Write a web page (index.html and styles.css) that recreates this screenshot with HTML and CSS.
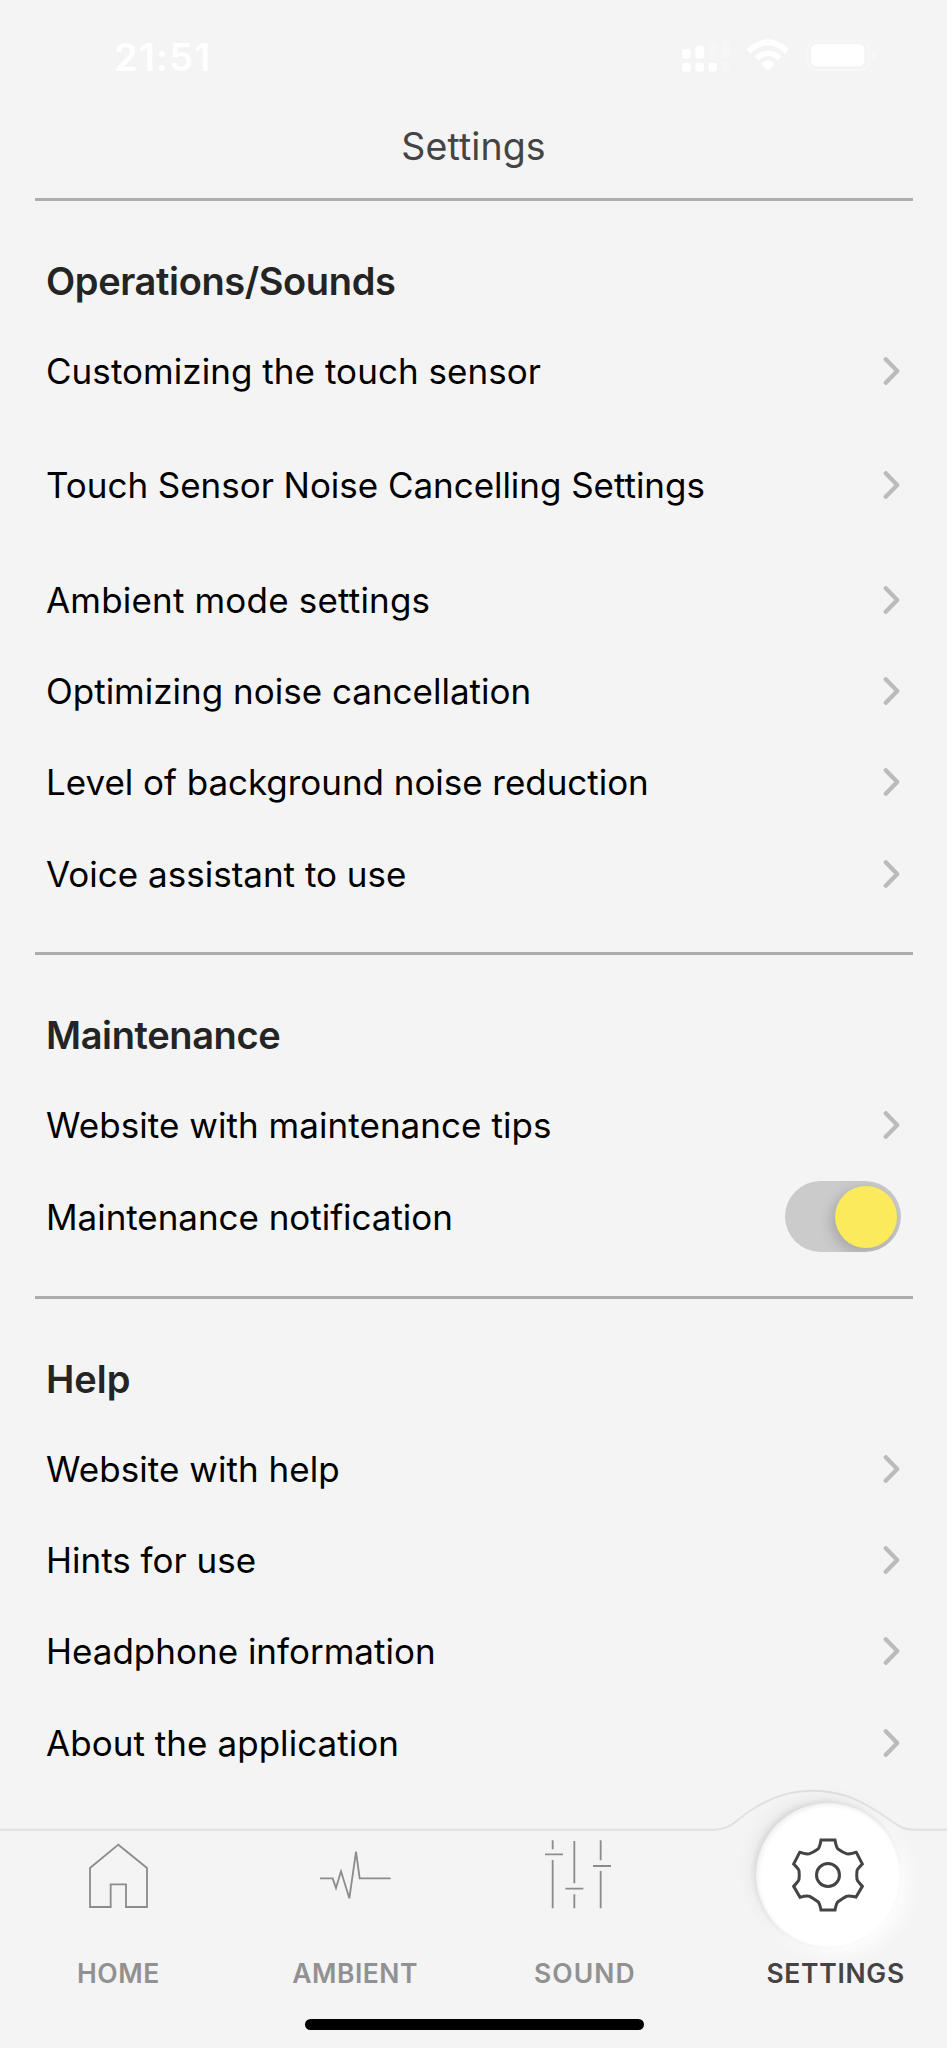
FILE: index.html
```html
<!DOCTYPE html>
<html lang="en">
<head>
<meta charset="utf-8">
<title>Settings</title>
<link rel="stylesheet" href="styles.css">
</head>
<body>
<svg class="defs" aria-hidden="true">
  <symbol id="chevron" viewBox="0 0 18 30"><path d="M2.8 3.2 L14.2 15 L2.8 26.8"/></symbol>
</svg>
<div class="screen">
  <div class="status">
    <span class="time">21:51</span>
    <svg class="status-icons" viewBox="120 55 600 105">
      <g fill="#fff">
        <rect x="126" y="88" width="26" height="29" rx="9"/>
        <rect x="166" y="78" width="26" height="39" rx="9"/>
        <rect x="206" y="70" width="24" height="47" rx="8" opacity=".2"/>
        <rect x="246" y="60" width="24" height="57" rx="8" opacity=".2"/>
        <rect x="126" y="129" width="26" height="27" rx="7"/>
        <rect x="166" y="129" width="26" height="27" rx="7"/>
        <rect x="206" y="129" width="25" height="27" rx="7"/>
        <rect x="246" y="129" width="24" height="27" rx="7" opacity=".2"/>
        <path d="M384 152 L363 132 Q384 113 405 132 Z"/>
        <rect x="513" y="74" width="160" height="66" rx="15"/>
        <path d="M697 94 Q706 100 706 107 Q706 114 697 120 Z" opacity=".45"/>
      </g>
      <g fill="none" stroke="#fff">
        <path d="M350 116 Q384 86 419 116" stroke-width="16"/>
        <path d="M325 95 Q384 41 441 95" stroke-width="17"/>
        <rect x="502" y="64" width="186" height="87" rx="26" stroke-width="6" opacity=".3"/>
      </g>
    </svg>
  </div>
  <header class="title">Settings</header>

  <main class="sections">
    <section class="section">
      <h2>Operations/Sounds</h2>
      <div class="row"><span>Customizing the touch sensor</span><svg class="chev"><use href="#chevron"/></svg></div>
      <div class="row tall"><span class="tight">Touch Sensor Noise Cancelling Settings</span><svg class="chev"><use href="#chevron"/></svg></div>
      <div class="row"><span class="loose">Ambient mode settings</span><svg class="chev"><use href="#chevron"/></svg></div>
      <div class="row"><span class="plain">Optimizing noise cancellation</span><svg class="chev"><use href="#chevron"/></svg></div>
      <div class="row"><span class="tight">Level of background noise reduction</span><svg class="chev"><use href="#chevron"/></svg></div>
      <div class="row"><span class="plain">Voice assistant to use</span><svg class="chev"><use href="#chevron"/></svg></div>
    </section>
    <section class="section">
      <h2>Maintenance</h2>
      <div class="row"><span>Website with maintenance tips</span><svg class="chev"><use href="#chevron"/></svg></div>
      <div class="row"><span class="tight">Maintenance notification</span><span class="toggle"><i class="knob"></i></span></div>
    </section>
    <section class="section">
      <h2 class="short">Help</h2>
      <div class="row"><span>Website with help</span><svg class="chev"><use href="#chevron"/></svg></div>
      <div class="row"><span class="plain">Hints for use</span><svg class="chev"><use href="#chevron"/></svg></div>
      <div class="row"><span class="plain">Headphone information</span><svg class="chev"><use href="#chevron"/></svg></div>
      <div class="row"><span>About the application</span><svg class="chev"><use href="#chevron"/></svg></div>
    </section>
  </main>

  <nav class="nav">
    <svg class="nav-edge" viewBox="0 1788 947 60"><path d="M0 1829.7 H713 C733 1829.7 737 1818 753 1809 C773 1796 792 1790.8 812 1790.8 C846 1790.8 867 1804 890 1820 C900 1827 904 1829.7 915 1829.7 H947"/></svg>
    <div class="tab">
      <svg class="icon" viewBox="174 90 360 390"><path d="M355 134 L441 204 V321 H378 V253 H332 V321 H270 V204 Z"/></svg>
      <span>HOME</span>
    </div>
    <div class="tab">
      <svg class="icon" viewBox="885 90 360 390"><path d="M960 235 H998 L1008 264 L1023 214 L1048 295 L1068 155 L1079 235 H1172"/></svg>
      <span>AMBIENT</span>
    </div>
    <div class="tab sound">
      <svg class="icon" viewBox="153 180 360 390"><path d="M236 211 V238 M213 253 H267 M236 270 V415 M301 213 V340 M274 356 H328 M301 373 V415 M380 211 V271 M357 288 H411 M380 303 V415"/></svg>
      <span>SOUND</span>
    </div>
    <div class="tab active">
      <div class="disc"></div>
      <svg class="icon" viewBox="207 210 360 390">
        <path d="M363 240 H405 C407 252 409 262 414 267 C421 272 430 278 439 281 C447 284 458 279 469 277 L487 312 C479 321 472 326 471 332 C470 340 470 350 471 358 C472 364 479 370 487 379 L468 411 C458 409 447 406 439 409 C430 414 421 420 414 425 C409 430 407 440 405 450 H363 C361 440 359 430 354 425 C347 420 338 414 329 409 C321 406 310 409 300 412 L281 379 C289 370 296 364 297 358 C298 350 298 340 297 332 C296 326 289 321 281 312 L299 277 C310 279 321 284 329 281 C338 278 347 272 354 267 C359 262 361 252 363 240 Z"/>
        <circle cx="384" cy="345" r="34.500"/>
      </svg>
      <span>SETTINGS</span>
    </div>
    <div class="indicator"></div>
  </nav>
</div>
</body>
</html>
```
FILE: styles.css
```css
* { box-sizing: border-box; }
body { margin: 0; background: #f4f4f4; font-family: "Inter", sans-serif; color: #000; }
.defs { position: absolute; width: 0; height: 0; }
.screen { width: 947px; height: 2048px; display: flex; flex-direction: column; overflow: hidden; }

.status { flex: none; height: 114px; padding: 38px 67px 0 114px; display: flex; justify-content: space-between; align-items: flex-start; }
.time { color: #fff; font-size: 38px; font-weight: 600; line-height: 38px; letter-spacing: 1.1px; }
.status-icons { width: 200px; height: 35px; }
.title { flex: none; height: 84px; text-align: center; font-size: 37.500px; line-height: 66px; letter-spacing: .1px; color: #444; }

.sections { flex: none; height: 1590px; padding: 0 34.500px; }
.section { border-top: 3px solid #adadad; padding: 0 11.500px 33px; }
.section:last-child { padding-bottom: 0; }
.section h2 { margin: 0; height: 124.300px; padding-top: 57px; font-size: 38px; line-height: 46px; font-weight: 600; letter-spacing: -.38px; color: #242424; }
.section h2.short { letter-spacing: 0; }
.row { height: 91.400px; display: flex; align-items: center; justify-content: space-between; font-size: 35px; line-height: 42px; letter-spacing: .05px; }
.row.tall { height: 137.200px; }
.plain { letter-spacing: 0; }
.tight { letter-spacing: -.04px; }
.loose { letter-spacing: .18px; }
.chev { width: 18px; height: 30px; fill: none; stroke: #bbb; stroke-width: 4.300; stroke-linecap: round; stroke-linejoin: round; }
.toggle { width: 116.500px; height: 71px; padding: 4.500px; border-radius: 36px; background: #cbcbcb; display: flex; justify-content: flex-end; overflow: hidden; }
.knob { width: 62px; height: 62px; border-radius: 50%; background: #fbea5b; box-shadow: -3px 4px 14px rgba(0, 0, 0, .2); }

.nav { flex: none; position: relative; height: 260px; display: grid; grid-template-columns: repeat(4, 1fr); align-items: start; padding-top: 42px; }
.nav-edge { position: absolute; left: 0; top: 0; width: 947px; height: 60px; fill: none; stroke: #e0e0e0; stroke-width: 2; }
.tab { position: relative; display: flex; flex-direction: column; align-items: center; font-size: 26.500px; font-weight: 600; line-height: 32px; letter-spacing: .5px; color: #919191; }
.tab .icon { position: relative; width: 120px; height: 130px; margin-bottom: -3px; fill: none; stroke: #8c8c8c; stroke-width: 5.500; }
.tab.sound { left: -7px; letter-spacing: 1.1px; }
.tab.active { color: #444; letter-spacing: .7px; }
.tab.active span { position: relative; padding-left: 14px; }
.tab.active .icon { stroke: #444; stroke-width: 9; }
.disc { position: absolute; left: 46px; top: -27px; width: 144px; height: 144px; border-radius: 50%; background: #fff; box-shadow: inset 2px 2px 4px rgba(0, 0, 0, .07), -2px -2px 5px rgba(0, 0, 0, .08), -6px -6px 16px rgba(0, 0, 0, .05), 8px 8px 18px rgba(255, 255, 255, .9); }
.indicator { position: absolute; left: 304.500px; bottom: 18px; width: 339px; height: 11px; border-radius: 6px; background: #000; }
```
